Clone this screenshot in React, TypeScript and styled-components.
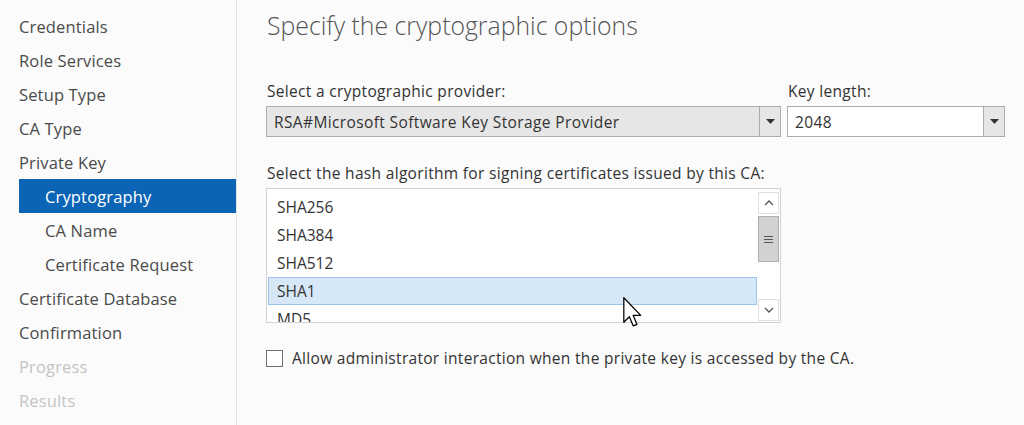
import React from "react";
import styled, { createGlobalStyle } from "styled-components";

const Global = createGlobalStyle`
  html, body { margin: 0; padding: 0; background: #fbfbfb; }
  body { font-family: "Open Sans", "Noto Sans", sans-serif; color: #3c3c3c; }
  #root { width: 1024px; height: 425px; overflow: hidden; }
`;

const Page = styled.div`
  display: flex;
  width: 1024px;
  height: 425px;
  background: #fbfbfb;
  position: relative;
`;

const Sidebar = styled.nav`
  width: 237px;
  border-right: 1px solid #e4e4e4;
  padding: 9px 0 0 19px;
  box-sizing: border-box;
  flex: none;
  display: flex;
  flex-direction: column;
`;

const NavItem = styled.div<{ $sub?: boolean; $active?: boolean; $disabled?: boolean }>`
  height: 34px;
  width: 217px;
  display: flex;
  align-items: center;
  padding-left: ${(p) => (p.$sub || p.$active ? 26 : 0)}px;
  box-sizing: border-box;
  font-size: 16.5px;
  letter-spacing: 0.15px;
  white-space: nowrap;
  color: ${(p) => (p.$active ? "#ffffff" : p.$disabled ? "#c4c4c4" : "#4a4a4a")};
  background: ${(p) => (p.$active ? "#0b64b5" : "transparent")};
`;

const Main = styled.main`
  flex: 1;
  padding: 9px 0 0 29px;
  display: flex;
  flex-direction: column;
`;

const Title = styled.h1`
  margin: 0 0 0 1px;
  font-size: 24.8px;
  font-weight: 300;
  letter-spacing: 0;
  color: #555;
  line-height: 32px;
  white-space: nowrap;
`;

const FieldRow = styled.div`
  display: grid;
  grid-template-columns: 515px 218px;
  column-gap: 6px;
  margin-top: 41px;
`;

const Field = styled.div`
  display: flex;
  flex-direction: column;
`;

const Label = styled.label`
  font-size: 15.5px;
  letter-spacing: 0.32px;
  color: #333;
  line-height: 18px;
  margin: 0 0 6px 1px;
  white-space: nowrap;
`;

const Combo = styled.div<{ $gray?: boolean }>`
  height: 31px;
  box-sizing: border-box;
  border: 1px solid #acacac;
  background: ${(p) => (p.$gray ? "#e6e6e6" : "#ffffff")};
  display: flex;
  align-items: stretch;
`;

const ComboText = styled.div`
  flex: 1;
  display: flex;
  align-items: center;
  padding-left: 7px;
  font-size: 15.5px;
  letter-spacing: 0.38px;
  color: #333;
  white-space: nowrap;
`;

const ComboButton = styled.div`
  width: 20px;
  border-left: 1px solid #acacac;
  background: #e6e6e6;
  display: flex;
  align-items: center;
  justify-content: center;
`;

const Arrow = () => (
  <svg width="9" height="5" viewBox="0 0 9 5">
    <path d="M0 0 H9 L4.5 5 Z" fill="#333" />
  </svg>
);

const HashSection = styled.div`
  display: flex;
  flex-direction: column;
  margin-top: 27px;
`;

const ListBox = styled.div`
  width: 515px;
  height: 135px;
  box-sizing: border-box;
  border: 1px solid #d2d2d2;
  background: #ffffff;
  display: flex;
  overflow: hidden;
`;

const ListItems = styled.div`
  flex: 1;
  padding: 4px 0 0 1px;
  display: flex;
  flex-direction: column;
`;

const ListItem = styled.div<{ $selected?: boolean }>`
  height: 28px;
  flex: none;
  box-sizing: border-box;
  display: flex;
  align-items: center;
  padding-left: 8px;
  font-size: 15.5px;
  color: #333;
  border: 1px solid ${(p) => (p.$selected ? "#9cc3e6" : "transparent")};
  background: ${(p) => (p.$selected ? "#d6e7f8" : "transparent")};
`;

const ScrollBar = styled.div`
  width: 23px;
  padding: 3px 1px 1px 1px;
  box-sizing: border-box;
  display: flex;
  flex-direction: column;
`;

const ScrollBtn = styled.div`
  height: 22px;
  box-sizing: border-box;
  border: 1px solid #e0e0e0;
  background: #fff;
  display: flex;
  align-items: center;
  justify-content: center;
  flex: none;
`;

const Track = styled.div`
  flex: 1;
  display: flex;
  flex-direction: column;
  padding: 2px 0;
`;

const Thumb = styled.div`
  height: 46px;
  box-sizing: border-box;
  border: 1px solid #b0b0b0;
  background: #d2d2d2;
  display: flex;
  flex-direction: column;
  align-items: center;
  justify-content: center;
  gap: 2px;
`;

const Grip = styled.span`
  width: 9px;
  height: 1px;
  background: #555;
`;

const CheckRow = styled.div`
  display: flex;
  align-items: center;
  gap: 9px;
  margin-top: 24px;
`;

const CheckBox = styled.div`
  width: 17px;
  height: 17px;
  box-sizing: border-box;
  border: 1px solid #707070;
  background: #fff;
`;

const CheckLabel = styled.span`
  font-size: 15.5px;
  letter-spacing: 0.3px;
  color: #333;
  white-space: nowrap;
`;

const Cursor = styled.svg`
  position: absolute;
  left: 623px;
  top: 297px;
`;

const navItems: { label: string; sub?: boolean; active?: boolean; disabled?: boolean }[] = [
  { label: "Credentials" },
  { label: "Role Services" },
  { label: "Setup Type" },
  { label: "CA Type" },
  { label: "Private Key" },
  { label: "Cryptography", active: true },
  { label: "CA Name", sub: true },
  { label: "Certificate Request", sub: true },
  { label: "Certificate Database" },
  { label: "Confirmation" },
  { label: "Progress", disabled: true },
  { label: "Results", disabled: true },
];

const hashes = ["SHA256", "SHA384", "SHA512", "SHA1", "MD5"];

export default function App() {
  return (
    <>
      <Global />
      <Page>
        <Sidebar>
          {navItems.map((n) => (
            <NavItem key={n.label} $sub={n.sub} $active={n.active} $disabled={n.disabled}>
              {n.label}
            </NavItem>
          ))}
        </Sidebar>
        <Main>
          <Title>Specify the cryptographic options</Title>
          <FieldRow>
            <Field>
              <Label>Select a cryptographic provider:</Label>
              <Combo $gray>
                <ComboText>RSA#Microsoft Software Key Storage Provider</ComboText>
                <ComboButton>
                  <Arrow />
                </ComboButton>
              </Combo>
            </Field>
            <Field>
              <Label>Key length:</Label>
              <Combo>
                <ComboText>2048</ComboText>
                <ComboButton>
                  <Arrow />
                </ComboButton>
              </Combo>
            </Field>
          </FieldRow>
          <HashSection>
            <Label>Select the hash algorithm for signing certificates issued by this CA:</Label>
            <ListBox>
              <ListItems>
                {hashes.map((h) => (
                  <ListItem key={h} $selected={h === "SHA1"}>
                    {h}
                  </ListItem>
                ))}
              </ListItems>
              <ScrollBar>
                <ScrollBtn>
                  <svg width="10" height="6" viewBox="0 0 10 6">
                    <path d="M1 5 L5 1 L9 5" fill="none" stroke="#555" strokeWidth="1.3" />
                  </svg>
                </ScrollBtn>
                <Track>
                  <Thumb>
                    <Grip />
                    <Grip />
                    <Grip />
                  </Thumb>
                </Track>
                <ScrollBtn>
                  <svg width="10" height="6" viewBox="0 0 10 6">
                    <path d="M1 1 L5 5 L9 1" fill="none" stroke="#555" strokeWidth="1.3" />
                  </svg>
                </ScrollBtn>
              </ScrollBar>
            </ListBox>
          </HashSection>
          <CheckRow>
            <CheckBox />
            <CheckLabel>Allow administrator interaction when the private key is accessed by the CA.</CheckLabel>
          </CheckRow>
        </Main>
        <Cursor width="19" height="30" viewBox="0 0 12 19">
          <path d="M0.5 0.5 L0.5 16 L4 12.5 L6.5 18.3 L8.8 17.3 L6.4 11.6 L11.2 11.6 Z" fill="#fff" stroke="#000" strokeWidth="0.8" strokeLinejoin="round" />
        </Cursor>
      </Page>
    </>
  );
}
